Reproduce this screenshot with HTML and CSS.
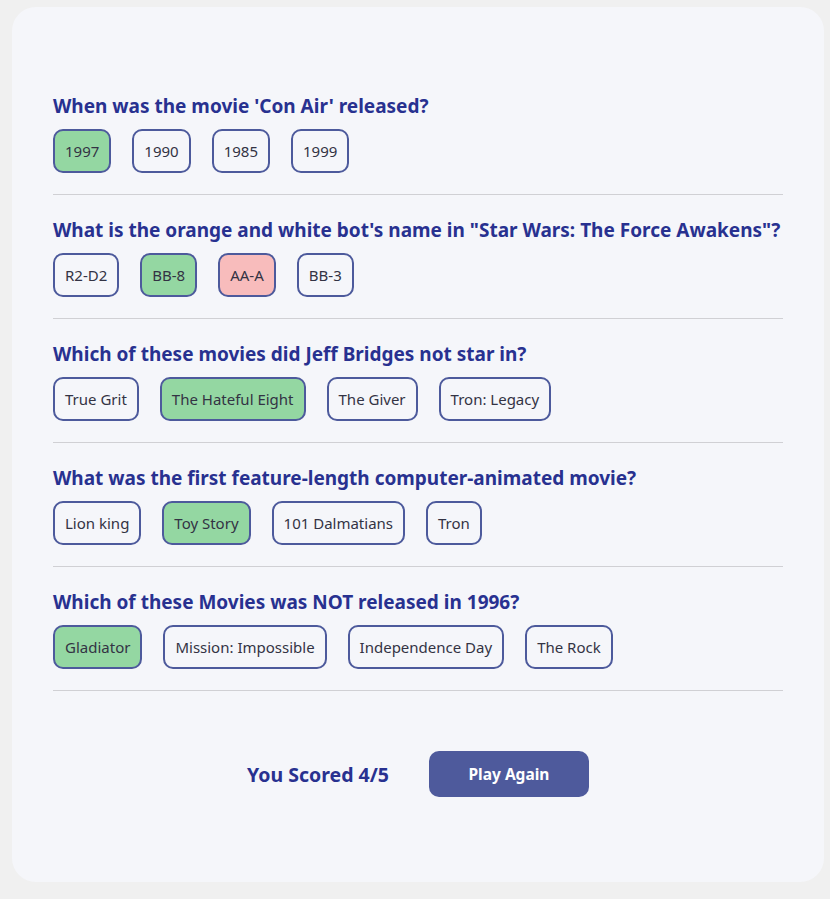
FILE: index.html
```html
<!DOCTYPE html>
<html lang="en">
<head>
<meta charset="utf-8">
<title>Quiz</title>
<link rel="stylesheet" href="styles.css">
</head>
<body>
<main class="card">
  <section class="question">
    <h2 class="q-title">When was the movie 'Con Air' released?</h2>
    <div class="answers">
      <button class="answer correct">1997</button>
      <button class="answer">1990</button>
      <button class="answer">1985</button>
      <button class="answer">1999</button>
    </div>
  </section>
  <section class="question">
    <h2 class="q-title">What is the orange and white bot's name in "Star Wars: The Force Awakens"?</h2>
    <div class="answers">
      <button class="answer">R2-D2</button>
      <button class="answer correct">BB-8</button>
      <button class="answer wrong">AA-A</button>
      <button class="answer">BB-3</button>
    </div>
  </section>
  <section class="question">
    <h2 class="q-title">Which of these movies did Jeff Bridges not star in?</h2>
    <div class="answers">
      <button class="answer">True Grit</button>
      <button class="answer correct">The Hateful Eight</button>
      <button class="answer">The Giver</button>
      <button class="answer">Tron: Legacy</button>
    </div>
  </section>
  <section class="question">
    <h2 class="q-title">What was the first feature-length computer-animated movie?</h2>
    <div class="answers">
      <button class="answer">Lion king</button>
      <button class="answer correct">Toy Story</button>
      <button class="answer">101 Dalmatians</button>
      <button class="answer">Tron</button>
    </div>
  </section>
  <section class="question">
    <h2 class="q-title">Which of these Movies was NOT released in 1996?</h2>
    <div class="answers">
      <button class="answer correct">Gladiator</button>
      <button class="answer">Mission: Impossible</button>
      <button class="answer">Independence Day</button>
      <button class="answer">The Rock</button>
    </div>
  </section>
  <div class="result">
    <p class="score">You Scored 4/5</p>
    <button class="play">Play Again</button>
  </div>
</main>
</body>
</html>
```

FILE: styles.css
```css
html, body {
  margin: 0;
  padding: 0;
}
body {
  background: #f0f0f0;
  font-family: "Noto Sans", "Open Sans", sans-serif;
  padding: 7px 6px 17px 12px;
}
.card {
  background: #f5f6fa;
  border-radius: 24px;
  padding: 87px 41px 85px 41px;
  box-sizing: border-box;
  width: 812px;
  height: 875px;
}
.question {
  border-bottom: 1px solid #d0d0d4;
  padding-bottom: 21px;
  margin-bottom: 23px;
}
.q-title {
  margin: 0 0 11px 0;
  font-size: 19px;
  line-height: 24px;
  font-weight: 700;
  color: #283190;
}
.answers {
  display: flex;
  gap: 21px;
}
.answer {
  font-family: inherit;
  font-size: 15px;
  line-height: 20px;
  color: #333344;
  background: #f5f6fa;
  border: 2px solid #4d5a9c;
  border-radius: 10px;
  padding: 10px 10px;
  height: 44px;
  box-sizing: border-box;
}
.answer.correct {
  background: #94d7a2;
}
.answer.wrong {
  background: #f8bcbc;
}
.result {
  display: flex;
  justify-content: center;
  align-items: center;
  gap: 40px;
  margin-top: 60px;
}
.score {
  margin: 0;
  font-size: 19.5px;
  font-weight: 700;
  color: #283190;
}
.play {
  font-family: inherit;
  font-size: 15.5px;
  font-weight: 700;
  color: #ffffff;
  background: #4e5a9c;
  border: none;
  border-radius: 10px;
  width: 160px;
  height: 46px;
}
```
